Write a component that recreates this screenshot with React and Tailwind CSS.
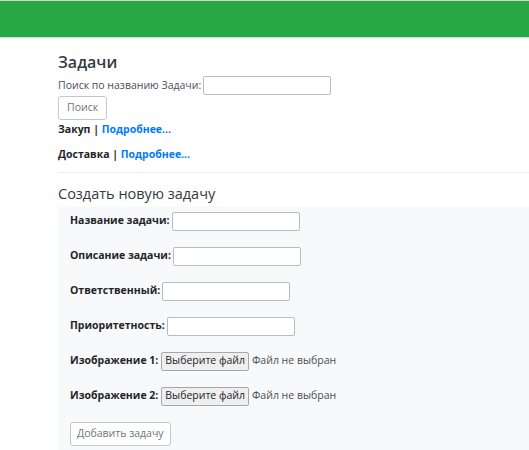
import React from "react";

const fields = [
  { label: "Название задачи:", width: "w-[128px]" },
  { label: "Описание задачи:", width: "w-[128px]" },
  { label: "Ответственный:", width: "w-[128px]" },
  { label: "Приоритетность:", width: "w-[128px]" },
];

const files = ["Изображение 1:", "Изображение 2:"];

const App = () => {
  return (
    <div className="min-h-[450px] bg-white text-[10.5px] text-[#212529] font-['Open_Sans',sans-serif]">
      {/* Header */}
      <div className="h-[38px] bg-[#28a745] border-t border-t-[#cfd8cf] border-b border-b-[#bfe3c7]" />

      <div className="pl-[58px] pt-[14px]">
        <h1 className="text-[16px] font-semibold leading-[20px] text-[#343a40]">Задачи</h1>

        <div className="mt-[4px] flex items-center gap-[2px] text-[#495057]">
          <span>Поиск по названию Задачи:</span>
          <input
            type="text"
            className="w-[128px] h-[19px] border border-[#b8bcc0] rounded-[2px] bg-white"
          />
        </div>

        <button className="mt-[1px] h-[24px] px-[8px] border border-[#c4c8cc] rounded-[3px] text-[#6c757d] bg-white">
          Поиск
        </button>

        <div className="mt-[2px] font-bold">
          Закуп | <span className="text-[#007bff]">Подробнее...</span>
        </div>
        <div className="mt-[9px] font-bold">
          Доставка | <span className="text-[#007bff]">Подробнее...</span>
        </div>

        <div className="mt-[9px] border-t border-[#eceeef]" />

        <h2 className="mt-[12px] text-[14.5px] font-medium leading-[18px] text-[#343a40]">Создать новую задачу</h2>

        <div className="mt-[4px] bg-[#f8f9fa] pl-[12px] pt-[5px] pb-[6px] flex flex-col gap-[16px]">
          {fields.map((f) => (
            <div key={f.label} className="flex items-center gap-[2px]">
              <span className="font-bold">{f.label}</span>
              <input
                type="text"
                className={`${f.width} h-[19px] border border-[#b8bcc0] rounded-[2px] bg-white`}
              />
            </div>
          ))}
          {files.map((f) => (
            <div key={f} className="flex items-center gap-[3px]">
              <span className="font-bold">{f}</span>
              <span className="h-[19px] px-[3px] flex items-center border border-[#a8a8a8] rounded-[2px] bg-[#efefef]">
                Выберите файл
              </span>
              <span className="text-[#495057]">Файл не выбран</span>
            </div>
          ))}
          <div>
            <button className="h-[24px] px-[6px] border border-[#c4c8cc] rounded-[3px] text-[#6c757d] bg-white">
              Добавить задачу
            </button>
          </div>
        </div>
      </div>
    </div>
  );
};

export default App;
